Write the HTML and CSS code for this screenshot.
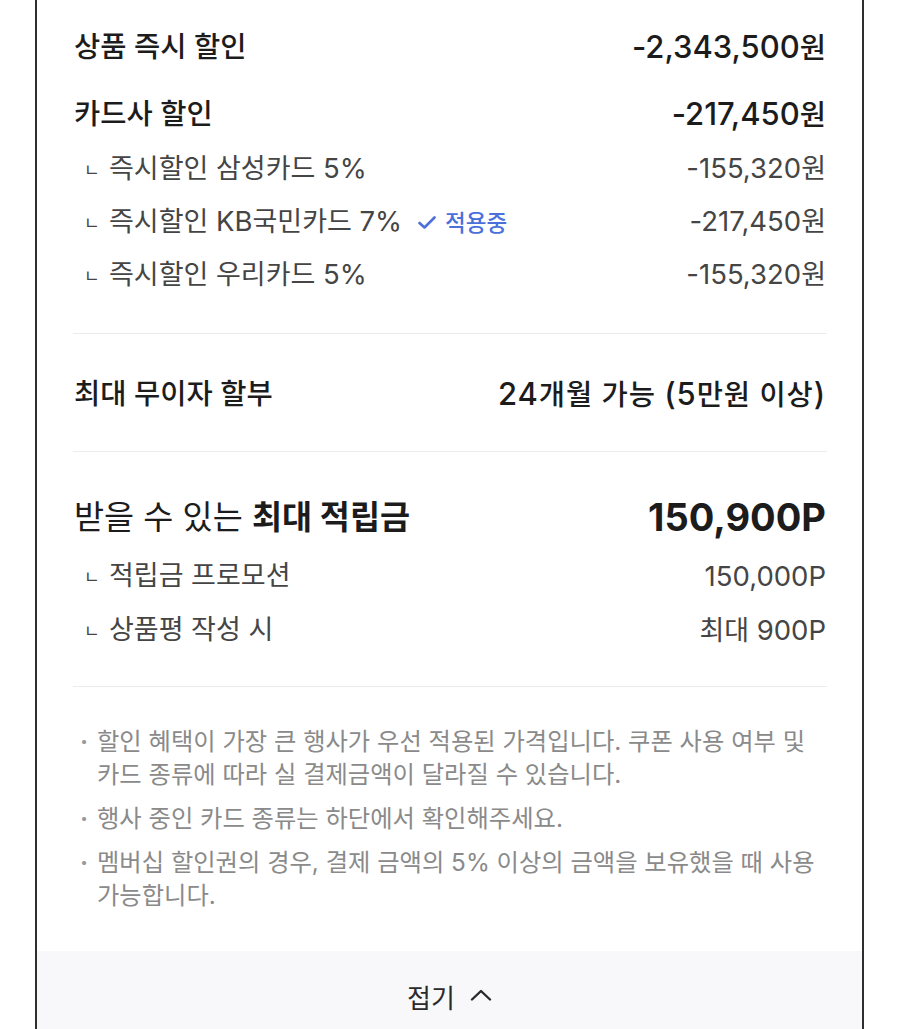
FILE: index.html
```html
<!DOCTYPE html>
<html lang="ko">
<head>
<meta charset="utf-8">
<link rel="stylesheet" href="styles.css">
</head>
<body>
<div class="card">
  <div class="content">
    <div class="row main first">
      <span class="label">상품 즉시 할인</span>
      <span class="amt"><span class="n">-2,343,500</span>원</span>
    </div>
    <div class="row main second">
      <span class="label">카드사 할인</span>
      <span class="amt"><span class="n">-217,450</span>원</span>
    </div>
    <div class="row sub">
      <span class="label"><span class="mark">ㄴ</span>즉시할인 삼성카드 <span class="n">5%</span></span>
      <span class="amt"><span class="n">-155,320</span>원</span>
    </div>
    <div class="row sub">
      <span class="label"><span class="mark">ㄴ</span>즉시할인 <span class="n">KB</span>국민카드 <span class="n">7%</span><span class="applied"><svg class="check" viewBox="0 0 18 13" width="18" height="13"><path d="M1.5 7 L6.5 11.5 L16.5 1.5" fill="none" stroke="currentColor" stroke-width="2.6" stroke-linecap="round" stroke-linejoin="round"/></svg>적용중</span></span>
      <span class="amt"><span class="n">-217,450</span>원</span>
    </div>
    <div class="row sub">
      <span class="label"><span class="mark">ㄴ</span>즉시할인 우리카드 <span class="n">5%</span></span>
      <span class="amt"><span class="n">-155,320</span>원</span>
    </div>
    <div class="divider d1"></div>
    <div class="row main install">
      <span class="label">최대 무이자 할부</span>
      <span class="amt wide"><span class="n">24</span>개월 가능 <span class="n">(5</span>만원 이상<span class="n">)</span></span>
    </div>
    <div class="divider d2"></div>
    <div class="row big">
      <span class="label">받을 수 있는 <b>최대 적립금</b></span>
      <span class="amt"><span class="n">150,900P</span></span>
    </div>
    <div class="row sub pt1">
      <span class="label"><span class="mark">ㄴ</span>적립금 프로모션</span>
      <span class="amt"><span class="n">150,000P</span></span>
    </div>
    <div class="row sub pt2">
      <span class="label"><span class="mark">ㄴ</span>상품평 작성 시</span>
      <span class="amt">최대 <span class="n">900P</span></span>
    </div>
    <div class="divider d3"></div>
    <ul class="notes">
      <li>할인 혜택이 가장 큰 행사가 우선 적용된 가격입니다. 쿠폰 사용 여부 및 카드 종류에 따라 실 결제금액이 달라질 수 있습니다.</li>
      <li>행사 중인 카드 종류는 하단에서 확인해주세요.</li>
      <li>멤버십 할인권의 경우, 결제 금액의 5% 이상의 금액을 보유했을 때 사용 가능합니다.</li>
    </ul>
  </div>
  <div class="footer">
    <span class="fold">접기<svg class="chev" viewBox="0 0 22 12" width="22" height="12"><path d="M2 10.5 L11 2 L20 10.5" fill="none" stroke="currentColor" stroke-width="2.4" stroke-linecap="round" stroke-linejoin="round"/></svg></span>
  </div>
</div>
</body>
</html>
```
FILE: styles.css
```css
html, body {
  margin: 0;
  padding: 0;
  background: #ffffff;
}
body {
  font-family: Inter, "Noto Sans CJK KR", sans-serif;
  color: #1f1f1f;
  height: 1029px;
  overflow: hidden;
}
.card {
  margin-left: 35px;
  width: 825px;
  border-left: 2.5px solid #2e2e2e;
  border-right: 2.5px solid #2e2e2e;
  background: #ffffff;
  min-height: 1100px;
}
.content {
  padding: 27px 36px 0 37px;
}
.row {
  display: flex;
  justify-content: space-between;
  align-items: flex-start;
  white-space: nowrap;
  box-sizing: border-box;
  padding-top: 2px;
}
.main {
  height: 36px;
  font-size: 28.5px;
  line-height: 36px;
  font-weight: 500;
  color: #1c1c1c;
}
.main .n {
  font-size: 31px;
}
.main .wide {
  letter-spacing: 0.9px;
}
.second {
  margin-top: 31px;
}
.sub {
  height: 36px;
  padding-top: 3px;
  font-size: 27px;
  line-height: 36px;
  font-weight: 400;
  color: #454545;
  margin-top: 17px;
}
.sub .n {
  font-size: 27.5px;
}
.mark {
  display: inline-block;
  font-size: 17px;
  width: 35px;
  padding-left: 10px;
  box-sizing: border-box;
  color: #444;
  vertical-align: 2px;
}
.applied {
  display: inline-flex;
  align-items: center;
  gap: 9px;
  margin-left: 16px;
  font-size: 22.5px;
  font-weight: 500;
  color: #4b70dc;
  vertical-align: 2px;
}
.check {
  display: block;
}
.divider {
  height: 1px;
  background: #ececec;
  margin-left: -1px;
  margin-right: -1px;
}
.d1 { margin-top: 44px; }
.install { margin-top: 40px; }
.d2 { margin-top: 41px; }
.big {
  height: 40px;
  margin-top: 43px;
  font-size: 32.7px;
  line-height: 40px;
  font-weight: 400;
  color: #1c1c1c;
}
.big b {
  font-weight: 700;
}
.big .n {
  font-size: 38px;
  font-weight: 700;
}
.pt1 { margin-top: 20px; }
.pt2 { margin-top: 18px; }
.d3 { margin-top: 41px; }
.notes {
  list-style: none;
  margin: 38px 0 0 0;
  padding: 0 0 0 22px;
  font-size: 24.3px;
  line-height: 33px;
  color: #8a8a8a;
  word-break: keep-all;
}
.notes li {
  position: relative;
  padding-left: 1px;
}
.notes li + li {
  margin-top: 11px;
}
.notes li::before {
  content: "·";
  position: absolute;
  left: -16px;
  top: 0;
  font-weight: 700;
  color: #999;
}
.footer {
  margin-top: 39px;
  height: 90px;
  background: #f8f8fa;
  display: flex;
  align-items: center;
  justify-content: center;
}
.fold {
  display: inline-flex;
  align-items: center;
  gap: 15px;
  font-size: 26px;
  color: #2a2a2a;
}
.chev {
  display: block;
  color: #2a2a2a;
  margin-top: -2px;
}
```
